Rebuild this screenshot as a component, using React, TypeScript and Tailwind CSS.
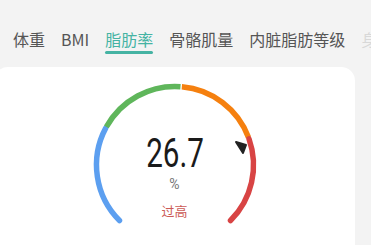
import React from "react";

const CX = 85;
const CY = 85;
const R = 78.5;

function pt(a: number) {
  const rad = (a * Math.PI) / 180;
  return [CX + R * Math.sin(rad), CY - R * Math.cos(rad)];
}

function arc(a1: number, a2: number) {
  const [x1, y1] = pt(a1);
  const [x2, y2] = pt(a2);
  const large = a2 - a1 > 180 ? 1 : 0;
  return `M ${x1.toFixed(2)} ${y1.toFixed(2)} A ${R} ${R} 0 ${large} 1 ${x2.toFixed(2)} ${y2.toFixed(2)}`;
}

const tabs = [
  { label: "体重", active: false },
  { label: "BMI", active: false },
  { label: "脂肪率", active: true },
  { label: "骨骼肌量", active: false },
  { label: "内脏脂肪等级", active: false },
];

export default function App() {
  return (
    <div
      className="w-[371px] h-[245px] overflow-hidden bg-[#f3f3f3]"
      style={{ fontFamily: '"Noto Sans CJK SC", "Noto Sans", sans-serif' }}
    >
      <div className="flex gap-[16px] pl-[13px] pt-[31px] whitespace-nowrap">
        {tabs.map((t) => (
          <div key={t.label} className="flex flex-col">
            <span
              className={`text-[16px] leading-[16px] ${
                t.active ? "text-[#45b3a3]" : "text-[#555555]"
              }`}
            >
              {t.label}
            </span>
            <div
              className={`mt-[4px] h-[3px] rounded-full ${
                t.active ? "bg-[#45b3a3]" : "bg-transparent"
              }`}
            />
          </div>
        ))}
        <div className="flex flex-col">
          <span className="text-[16px] leading-[16px] text-[#d8d8d8]">身</span>
        </div>
      </div>

      <div className="ml-[-6px] mt-[13px] w-[361px] h-[200px] rounded-[14px] bg-white flex flex-col items-center pt-[13px]">
        <div className="relative w-[170px] h-[170px]">
          <svg
            className="absolute inset-0"
            width="170"
            height="170"
            viewBox="0 0 170 170"
          >
            <path d={arc(-135, -62)} stroke="#5c9ff0" strokeWidth="5.5" fill="none" strokeLinecap="round" />
            <path d={arc(-61, 4)} stroke="#5fb65b" strokeWidth="5.5" fill="none" />
            <path d={arc(5, 69.5)} stroke="#f5800f" strokeWidth="5.5" fill="none" />
            <path d={arc(70.5, 135)} stroke="#d84444" strokeWidth="5.5" fill="none" strokeLinecap="round" />
            <polygon
              points="146,62 156,65 153,73"
              fill="#222222"
              stroke="#222222"
              strokeWidth="2"
              strokeLinejoin="round"
            />
          </svg>
          <div className="relative flex flex-col items-center pt-[54px]">
            <div
              className="text-[40px] leading-[40px] text-[#1a1a1a] scale-x-[0.74]"
              style={{ fontFamily: "Roboto, sans-serif" }}
            >
              26.7
            </div>
            <div
              className="mt-[3px] text-[14px] leading-[14px] text-[#777777]"
              style={{ fontFamily: "Roboto, sans-serif" }}
            >
              %
            </div>
            <div className="mt-[13px] text-[13px] leading-[13px] text-[#cc5b57]">
              过高
            </div>
          </div>
        </div>
      </div>
    </div>
  );
}
